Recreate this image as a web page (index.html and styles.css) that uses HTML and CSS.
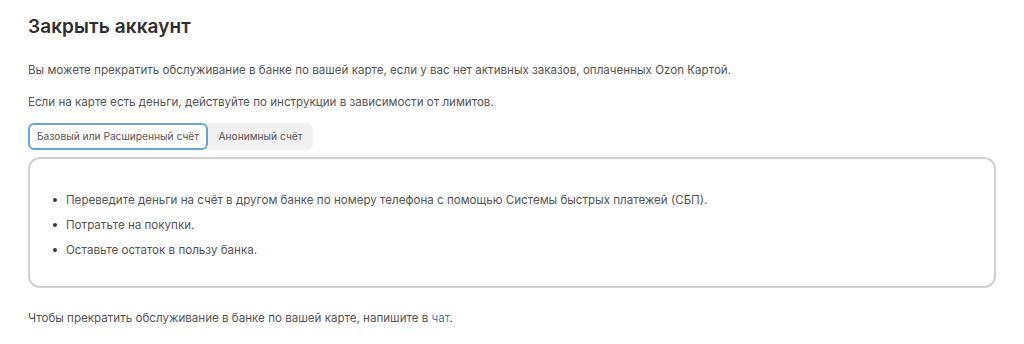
FILE: index.html
```html
<!DOCTYPE html>
<html lang="ru">
<head>
<meta charset="utf-8">
<link rel="stylesheet" href="styles.css">
</head>
<body>
<main class="page">
  <h1 class="title">Закрыть аккаунт</h1>
  <p class="text first">Вы можете прекратить обслуживание в банке по вашей карте, если у вас нет активных заказов, оплаченных Ozon Картой.</p>
  <p class="text second">Если на карте есть деньги, действуйте по инструкции в зависимости от лимитов.</p>
  <div class="tabs">
    <button class="tab active">Базовый или Расширенный счёт</button>
    <button class="tab">Анонимный счёт</button>
  </div>
  <div class="panel">
    <ul class="list">
      <li>Переведите деньги на счёт в другом банке по номеру телефона с помощью Системы быстрых платежей (СБП).</li>
      <li>Потратьте на покупки.</li>
      <li>Оставьте остаток в пользу банка.</li>
    </ul>
  </div>
  <p class="text footer">Чтобы прекратить обслуживание в банке по вашей карте, напишите в <a class="link" href="#">чат</a>.</p>
</main>
</body>
</html>
```

FILE: styles.css
```css
* { box-sizing: border-box; }
html, body { margin: 0; padding: 0; background: #fff; }
body { font-family: Inter, "Noto Sans", sans-serif; color: #4a4a4a; }
.page { padding: 14px 28px 0 28px; width: 1024px; }
.title { margin: 0; font-size: 19px; font-weight: 600; color: #2e2e2e; line-height: 26px; letter-spacing: 0.1px; }
.text { margin: 0; font-size: 11.6px; line-height: 16px; color: #555; }
.first { margin-top: 22px; }
.second { margin-top: 16px; }
.tabs { display: flex; margin-top: 13px; }
.tab { font-family: inherit; font-size: 10.2px; color: #555; border: none; background: #f1f1f2; height: 27px; padding: 0; margin: 0; line-height: 27px; }
.tab.active { background: #fff; border: 2px solid #6aa3d6; border-radius: 6px; width: 180px; line-height: 23px; }
.tab:not(.active) { border-radius: 0 6px 6px 0; width: 105px; }
.panel { margin-top: 7px; width: 968px; height: 131px; border: 2px solid #d0d0d2; border-radius: 12px; padding: 33px 0 0 0; }
.list { margin: 0; padding: 0 0 0 36px; font-size: 11.6px; color: #555; list-style: none; }
.list li { position: relative; line-height: 16px; margin-bottom: 9px; }
.list li::before { content: ""; position: absolute; left: -13px; top: 6px; width: 4px; height: 4px; border-radius: 50%; background: #3a3a3a; }
.footer { margin-top: 22px; }
.link { color: #3a7fc4; text-decoration: none; }
```
